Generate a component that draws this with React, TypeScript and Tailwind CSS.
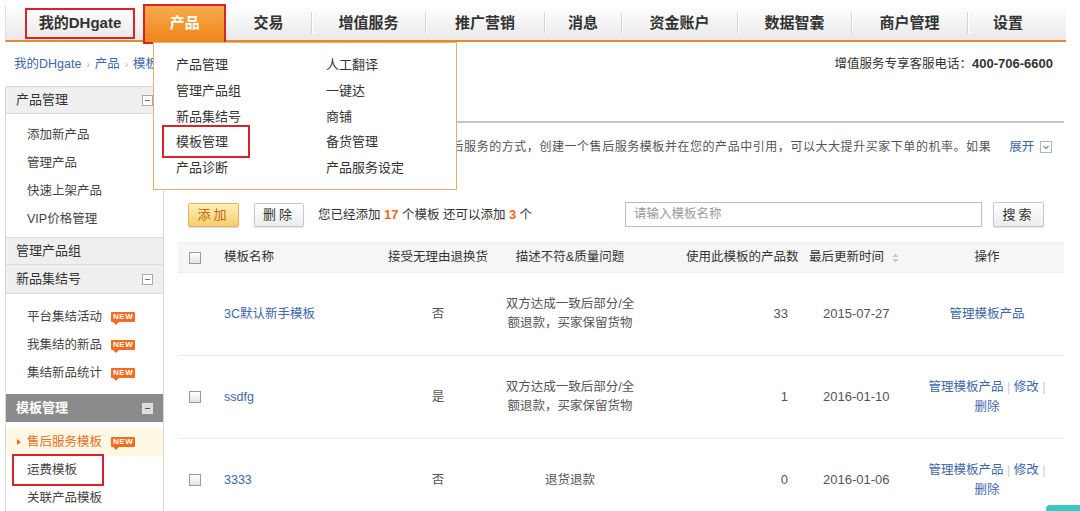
import React from 'react';

const FONT = "font-['Liberation_Sans','Noto_Sans_CJK_SC',sans-serif]";

const MinusBox = ({ dark }: { dark?: boolean }) => (
  <span
    className={`inline-flex items-center justify-center w-[11px] h-[11px] border ${
      dark ? 'border-[#e0e0e0] bg-[#dcdcdc]' : 'border-[#a8a8a8] bg-white'
    }`}
  >
    <span className={`w-[5px] h-px ${dark ? 'bg-[#555]' : 'bg-[#777]'}`} />
  </span>
);

const NewTag = () => (
  <span className="relative ml-[9px] inline-block h-[10px] px-[2px] bg-[#f36c21] rounded-[1px] text-[8px] leading-[10px] font-bold text-white tracking-[0.5px]">
    NEW
    <span className="absolute left-[2px] -bottom-[3px] w-0 h-0 border-l-[3px] border-r-[3px] border-t-[3px] border-l-transparent border-r-transparent border-t-[#f36c21]" />
  </span>
);

const Checkbox = () => (
  <span className="inline-block w-[12px] h-[12px] border border-[#9a9a9a] bg-linear-to-b from-white to-[#e4e4e4]" />
);

const navItems = [
  { label: '交易', cls: 'w-[85px]' },
  { label: '增值服务', cls: 'w-[113px]' },
  { label: '推广营销', cls: 'w-[118px]' },
  { label: '消息', cls: 'w-[76px]' },
  { label: '资金账户', cls: 'w-[115px]' },
  { label: '数据智囊', cls: 'w-[113px]' },
  { label: '商户管理', cls: 'w-[115px]' },
  { label: '设置', cls: 'w-[98px] pr-[18px]' },
];

const Sep = () => <span className="w-px h-[22px] bg-[#d4d4d4] shadow-[1px_0_0_#fff]" />;

const rows = [
  {
    check: false,
    name: '3C默认新手模板',
    free: '否',
    desc: ['双方达成一致后部分/全', '额退款，买家保留货物'],
    count: '33',
    date: '2015-07-27',
    full: false,
  },
  {
    check: true,
    name: 'ssdfg',
    free: '是',
    desc: ['双方达成一致后部分/全', '额退款，买家保留货物'],
    count: '1',
    date: '2016-01-10',
    full: true,
  },
  {
    check: true,
    name: '3333',
    free: '否',
    desc: ['退货退款'],
    count: '0',
    date: '2016-01-06',
    full: true,
  },
];

const GRID = 'grid grid-cols-[34px_168px_116px_148px_156px_110px_154px]';

export default function App() {
  return (
    <div className={`relative w-[1080px] h-[511px] overflow-hidden bg-white text-[12px] text-[#333] ${FONT}`}>
      {/* top nav */}
      <div className="pt-[6px] pl-[5px]">
        <div className="flex h-[36px] w-[1061px] border-b-2 border-[#e8892a] border-l border-l-[#dedede] bg-linear-to-b from-[#fefefe] to-[#e9e9e9]">
          <div className="w-[142px] flex items-center">
            <span className="ml-[19px] w-[110px] h-[31px] border-2 border-[#d9232b] flex items-center justify-center text-[15px] font-bold text-[#333]">
              我的DHgate
            </span>
          </div>
          <div className="relative w-[85px] flex items-center justify-center bg-linear-to-b from-[#f7ab4a] to-[#ef861b] text-white text-[15px] font-bold">
            产品
            <span className="absolute -top-[2px] -bottom-[4px] -left-[1px] right-0 border-2 border-[#d9232b]" />
          </div>
          {navItems.map((n, i) => (
            <div key={n.label} className="flex items-center">
              {i > 0 && <Sep />}
              <div className={`${n.cls} flex items-center justify-center text-[15px] font-bold text-[#333]`}>{n.label}</div>
            </div>
          ))}
        </div>
      </div>

      {/* breadcrumb + phone */}
      <div className="mt-[14px] h-[16px] flex items-center justify-between pl-[14px] pr-[27px]">
        <div className="flex items-center gap-[5px] text-[#3f66a9] text-[12.5px]">
          <span>我的DHgate</span>
          <span className="text-[#aaa] text-[10px]">›</span>
          <span>产品</span>
          <span className="text-[#aaa] text-[10px]">›</span>
          <span>模板管理</span>
        </div>
        <div className="flex items-center text-[12.5px]">
          <span>增值服务专享客服电话：</span>
          <span className="font-bold text-[13px]">400-706-6600</span>
        </div>
      </div>

      <div className="mt-[14px] flex">
        {/* sidebar */}
        <div className="ml-[5px] w-[159px] border-l border-r border-t border-[#d8d8d8] text-[12.5px]">
          <div className="h-[27px] flex items-center justify-between pl-[10px] pr-[10px] bg-[#efefef] border-b border-[#dcdcdc] text-[13px]">
            <span>产品管理</span>
            <MinusBox />
          </div>
          <div className="pt-[7px] pb-[4px]">
            {['添加新产品', '管理产品', '快速上架产品', 'VIP价格管理'].map((t) => (
              <div key={t} className="h-[28px] flex items-center pl-[21px] text-[#444]">{t}</div>
            ))}
          </div>
          <div className="h-[28px] flex items-center pl-[10px] bg-[#efefef] border-t border-b border-[#dcdcdc] text-[13px]">
            管理产品组
          </div>
          <div className="h-[29px] flex items-center justify-between pl-[10px] pr-[10px] bg-[#efefef] border-b border-[#dcdcdc] text-[13px]">
            <span>新品集结号</span>
            <MinusBox />
          </div>
          <div className="pt-[9px] pb-[7px]">
            {['平台集结活动', '我集结的新品', '集结新品统计'].map((t) => (
              <div key={t} className="h-[28px] flex items-center pl-[21px] text-[#444]">
                {t}
                <NewTag />
              </div>
            ))}
          </div>
          <div className="h-[28px] flex items-center justify-between pl-[10px] pr-[10px] bg-[#8b8b8b] text-white font-bold text-[13px]">
            <span>模板管理</span>
            <MinusBox dark />
          </div>
          <div className="pt-[6px]">
            <div className="relative h-[28px] flex items-center pl-[21px] bg-[#fff8e5] text-[#e4701e]">
              <span className="absolute left-[11px] top-[11px] w-0 h-0 border-t-[3px] border-b-[3px] border-l-[4px] border-t-transparent border-b-transparent border-l-[#e4701e]" />
              售后服务模板
              <NewTag />
            </div>
            <div className="relative h-[28px] flex items-center pl-[21px] text-[#444]">
              运费模板
              <span className="absolute left-[6px] -top-[2px] w-[92px] h-[32px] border-2 border-[#d9232b]" />
            </div>
            <div className="h-[28px] flex items-center pl-[21px] text-[#444]">关联产品模板</div>
          </div>
        </div>

        {/* main */}
        <div className="ml-[14px] w-[886px]">
          <div className="h-[37px] border-b-2 border-[#c6c6c6]" />

          <div className="mt-[16px] h-[16px] flex items-center pl-[10px]">
            <div className="whitespace-nowrap text-[12px] tracking-[0.55px] text-[#555] leading-[16px]">
              为了提升买家购物体验，建议您采用设置统一售后服务的方式，创建一个售后服务模板并在您的产品中引用，可以大大提升买家下单的机率。如果
            </div>
            <span className="ml-[18px] text-[#3f66a9] text-[12.5px]">展开</span>
            <svg className="ml-[6px]" width="12" height="12" viewBox="0 0 12 12">
              <rect x="0.5" y="0.5" width="11" height="11" fill="#fff" stroke="#a9b6cc" />
              <path d="M3.5 5l2.5 2.5L8.5 5" fill="none" stroke="#6f86ad" strokeWidth="1.1" />
            </svg>
          </div>

          {/* toolbar */}
          <div className="mt-[46px] h-[27px] flex items-center">
            <button className="ml-[10px] w-[51px] h-[24px] border border-[#e2b55c] rounded-[2px] bg-linear-to-b from-[#fff0b8] to-[#f7cd69] text-[#c46a12] text-[13px] tracking-[3px] shadow-[0_1px_1px_rgba(0,0,0,0.15)]">
              添加
            </button>
            <button className="ml-[15px] w-[50px] h-[24px] border border-[#c8c8c8] rounded-[2px] bg-linear-to-b from-white to-[#ececec] text-[#333] text-[13px] tracking-[3px] shadow-[0_1px_1px_rgba(0,0,0,0.12)]">
              删除
            </button>
            <span className="ml-[14px] text-[12.5px]">
              您已经添加 <b className="text-[#ea6a1d] text-[13px]">17</b> 个模板 还可以添加{' '}
              <b className="text-[#ea6a1d] text-[13px]">3</b> 个
            </span>
            <div className="ml-auto w-[357px] h-[25px] border border-[#bdbdbd] flex items-center pl-[8px] text-[#9a9a9a] text-[12.5px]">
              请输入模板名称
            </div>
            <button className="ml-[11px] mr-[20px] w-[51px] h-[25px] border border-[#c8c8c8] rounded-[2px] bg-linear-to-b from-white to-[#ececec] text-[#333] text-[13px] tracking-[3px] shadow-[0_1px_1px_rgba(0,0,0,0.12)]">
              搜索
            </button>
          </div>

          {/* table */}
          <div className="mt-[14px]">
            <div className={`${GRID} h-[31px] items-center bg-[#f6f6f6] border-t border-[#eeeeee] border-b border-[#e2e2e2] text-[12.5px] text-[#333]`}>
              <div className="pl-[11px] flex items-center"><Checkbox /></div>
              <div className="pl-[12px]">模板名称</div>
              <div className="text-center">接受无理由退换货</div>
              <div className="text-center">描述不符&amp;质量问题</div>
              <div className="pl-[42px]">使用此模板的产品数</div>
              <div className="pl-[9px] flex items-center">
                最后更新时间
                <svg className="ml-[8px]" width="7" height="10" viewBox="0 0 7 10">
                  <path d="M3.5 0.5L6.5 4H0.5z" fill="#c8c8c8" />
                  <path d="M3.5 9.5L6.5 6H0.5z" fill="#c8c8c8" />
                </svg>
              </div>
              <div className="text-center">操作</div>
            </div>
            {rows.map((r) => (
              <div key={r.name} className={`${GRID} h-[83px] items-center border-b border-[#ededed] text-[12.5px] text-[#555]`}>
                <div className="pl-[11px] flex items-center">{r.check && <Checkbox />}</div>
                <div className="pl-[12px] text-[#3f66a9]">{r.name}</div>
                <div className="text-center">{r.free}</div>
                <div className="text-center leading-[19px]">
                  {r.desc.map((d) => (
                    <div key={d}>{d}</div>
                  ))}
                </div>
                <div className="text-right pr-[12px] text-[13px]">{r.count}</div>
                <div className="pl-[23px] text-[13px]">{r.date}</div>
                <div className="text-center text-[#3f66a9] leading-[20px]">
                  {r.full ? (
                    <>
                      <div>
                        管理模板产品 <span className="text-[#ccc]">|</span> 修改 <span className="text-[#ccc]">|</span>
                      </div>
                      <div>删除</div>
                    </>
                  ) : (
                    <div>管理模板产品</div>
                  )}
                </div>
              </div>
            ))}
          </div>
        </div>
      </div>

      {/* product dropdown */}
      <div className="absolute left-[153px] top-[42px] w-[304px] h-[148px] border border-[#e0b36e] bg-white z-10 text-[13px] text-[#333]">
        <div className="grid grid-cols-[150px_1fr] pl-[22px] pt-[9px]">
          {[
            ['产品管理', '人工翻译'],
            ['管理产品组', '一键达'],
            ['新品集结号', '商铺'],
            ['模板管理', '备货管理'],
            ['产品诊断', '产品服务设定'],
          ].map(([a, b]) => (
            <React.Fragment key={a}>
              <div className="h-[25.75px] flex items-center">{a}</div>
              <div className="h-[25.75px] flex items-center">{b}</div>
            </React.Fragment>
          ))}
        </div>
        <span className="absolute left-[8px] top-[82px] w-[88px] h-[33px] border-2 border-[#d9232b]" />
      </div>

      {/* floating teal tab */}
      <div className="absolute right-0 bottom-0 w-[34px] h-[6px] rounded-tl-[4px] bg-[#3cc7c2]" />
    </div>
  );
}
